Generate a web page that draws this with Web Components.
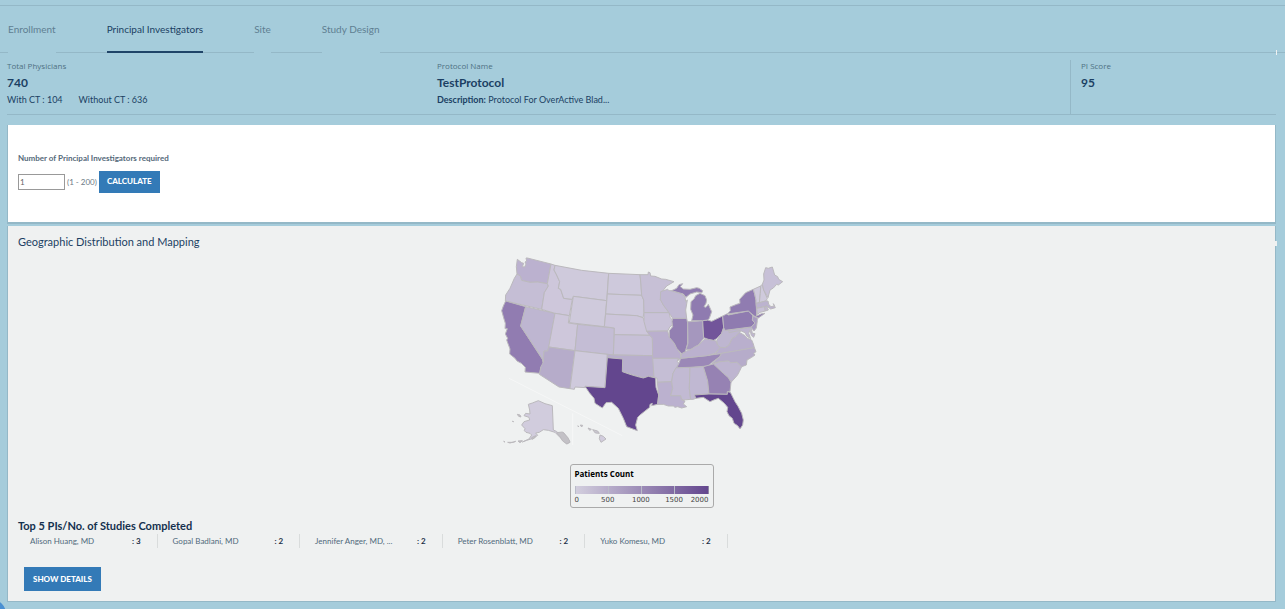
<!DOCTYPE html>
<html lang="en">
<head>
<meta charset="utf-8">
<title>Principal Investigators</title>
<style>
  body { margin: 0; background: #a5ccdb; font-family: Lato, "Liberation Sans", sans-serif; color: #1b3f63; overflow-x: hidden; }
</style>
</head>
<body>
<study-app></study-app>

<script>
const define = (name, html, setup) => {
  const t = document.createElement('template');
  t.innerHTML = html;
  customElements.define(name, class extends HTMLElement {
    constructor() {
      super();
      this.attachShadow({ mode: 'open' }).append(t.content.cloneNode(true));
    }
    connectedCallback() { if (setup) setup(this, this.shadowRoot); }
  });
};

define('tab-link', `
<style>
  :host { display: block; margin-bottom: -1px; }
  a { display: block; padding: 16px 0 15px; line-height: 14px; font-size: 10px; color: #5f7f92; text-decoration: none; background: #a5ccdb; border-bottom: 2px solid #a5ccdb; }
  :host([active]) a { color: #1b3f63; border-color: #1f4468; }
</style>
<a href="#"><slot></slot></a>`, (host, root) => {
  if (host.hasAttribute('active')) root.querySelector('a').setAttribute('aria-current', 'page');
});

define('tab-bar', `
<style>
  :host { display: block; position: relative; border-top: 1px solid #94b8c7; border-bottom: 1px solid #94b8c7; }
  :host::after { content: ""; position: absolute; right: 8px; bottom: -3px; width: 1px; height: 5px; background: #eff1f1; }
  nav { display: flex; gap: 51px; padding-left: 8px; }
</style>
<nav><slot></slot></nav>`);

define('stat-block', `
<style>
  :host { display: block; padding-bottom: 8px; }
  :host([divided]) { border-left: 1px solid #94b8c7; padding-left: 10px; }
  .label { font-family: "Open Sans", sans-serif; font-size: 8px; line-height: 12px; color: #4f7183; }
  .value { font-size: 12px; line-height: 22px; font-weight: 700; }
  .extra { font-size: 9px; line-height: 12px; }
</style>
<div class="label"><slot name="label"></slot></div>
<div class="value"><slot name="value"></slot></div>
<div class="extra"><slot></slot></div>`);

define('stat-row', `
<style>
  :host { display: grid; grid-template-columns: 430fr 633fr 206fr; margin: 7px 9px 0 7px; border-bottom: 1px solid #94b8c7; }
</style>
<slot></slot>`);

define('action-button', `
<style>
  :host { display: inline-block; }
  button { display: block; border: 0; background: #337ab7; color: #fff; font: 900 8px/16px Lato, sans-serif; padding: 2px 8px 4px; cursor: pointer; }
  :host([large]) button { padding: 4px 9px; }
</style>
<button type="button"><slot></slot></button>`);

define('pi-form', `
<style>
  :host { display: block; background: #fff; padding: 26px 10px 29px; border: 1px solid #94b8c7; border-top: 0; border-bottom-width: 2px; }
  label { display: block; font-size: 8px; font-weight: 700; line-height: 14px; color: #54697a; margin-bottom: 6px; }
  .row { display: flex; align-items: center; gap: 2px; font-size: 8px; line-height: 12px; color: #6c7a84; }
  input { box-sizing: border-box; width: 47px; height: 16px; margin: 0; border: 1px solid #999; padding: 0 1px; font: 8px Lato, sans-serif; color: #666; }
</style>
<label for="count">Number of Principal Investigators required</label>
<div class="row"><input id="count" type="text" value="1"><span>(1 - 200)</span><action-button>CALCULATE</action-button></div>`);

define('us-map', `
<style>
  :host { display: block; }
  svg { display: block; width: 300px; margin: 0 auto; }
  .states { stroke: #bbb9bd; stroke-width: 3; stroke-linejoin: round; }
  .inset { fill: none; stroke: #f6f7f7; stroke-width: 3; }
</style>
<svg viewBox="-9 0 900 600" role="img" aria-label="Patients by state"><g class="states"></g><path class="inset" d="M42 385L382 557M233 490V585"/></svg>`, (host, root) => {
  const states = [
    ['#bbb1cf', '67,28 80,38 86,40 82,50 89,51 93,42 90,36 95,33 93,24 97,24 168,42 157,101 128,96 105,97 80,91 76,78 66,72 64,50'],
    ['#c5bed5', '66,72 76,78 80,91 105,97 128,96 157,101 160,108 148,128 140,178 31,153 32,135 45,115 58,85'],
    ['#917cb1', '32,153 92,170 77,228 142,328 145,342 137,352 135,370 90,366 91,352 79,340 66,333 60,325 44,312 45,297 35,270 38,265 31,252 37,236 30,236 31,220 27,207 20,182 25,168'],
    ['#beb6d1', '92,170 180,190 162,290 158,303 147,303 145,330 77,228'],
    ['#cec7db', '168,42 180,46 177,60 185,75 194,95 190,115 197,118 206,145 232,148 223,197 180,190 140,178 148,128 160,108 157,101'],
    ['#cfcadc', '180,46 260,61 341,70 335,152 235,139 232,148 206,145 197,118 190,115 194,95 185,75 177,60'],
    ['#cfcadc', '235,139 335,152 328,230 223,218'],
    ['#cec7db', '180,190 223,197 220,219 248,223 240,302 161,291'],
    ['#c4bdd5', '248,223 358,234 355,315 240,302'],
    ['#b6acca', '161,291 240,302 225,416 192,411 133,373 138,350 145,337 147,303 158,303'],
    ['#cfcadc', '240,302 337,313 330,413 270,409 272,413 240,411 238,418 225,416'],
    ['#cec9dc', '341,70 435,74 438,105 440,136 337,132'],
    ['#cec9dc', '337,132 440,136 446,150 447,188 444,203 425,197 332,192'],
    ['#cdc6db', '332,192 425,197 444,203 450,218 457,238 464,256 358,254 358,234 328,230'],
    ['#c7c0d7', '358,254 464,256 472,264 474,317 355,315'],
    ['#b9afcd', '337,313 355,315 474,317 477,340 477,382 460,378 445,383 425,378 405,372 382,365 383,327 337,323'],
    ['#63468e', '337,323 383,327 382,365 405,373 425,379 445,384 460,379 482,384 483,412 491,435 488,463 470,467 472,460 465,463 464,472 435,495 428,502 422,525 427,542 395,530 385,505 370,475 350,457 333,458 322,474 300,460 297,445 283,428 270,409 330,413'],
    ['#c7c0d6', '435,74 459,74 460,66 465,68 467,78 480,79 500,87 512,88 537,95 515,108 502,124 496,148 505,165 522,188 447,188 446,150 440,136 438,105'],
    ['#c9c2d8', '447,188 522,188 526,203 535,214 533,225 525,230 518,243 455,244 447,215'],
    ['#baafce', '455,244 518,243 523,262 538,280 545,295 557,312 557,325 548,332 550,325 473,325 472,264 464,256'],
    ['#c5bed5', '473,325 550,325 547,335 552,340 545,353 534,370 530,395 487,397 486,384 477,382'],
    ['#bbb1cf', '487,397 530,395 533,415 527,437 557,437 560,450 570,453 565,462 575,470 560,474 548,470 540,472 535,468 520,468 505,463 488,463 491,435'],
    ['#c2bad3', '543,353 585,352 583,415 587,448 565,450 560,447 557,437 527,437 533,415 530,395 534,370'],
    ['#c0b8d2', '585,352 625,350 638,393 642,432 598,435 603,445 594,448 587,448 583,415'],
    ['#9b88b7', '557,325 635,317 680,310 674,320 650,338 640,348 585,352 545,353 552,340'],
    ['#bbb1ce', '557,325 560,312 575,303 590,298 600,290 612,285 628,268 645,268 663,273 668,285 676,292 660,310 635,317'],
    ['#9380b2', '533,205 575,205 578,220 578,280 571,305 560,311 545,295 538,280 523,262 523,242 533,230 531,215'],
    ['#a597be', '578,215 585,215 623,212 626,265 610,285 600,290 588,298 573,299 579,280'],
    ['#72559a', '623,212 638,210 650,214 683,198 686,233 680,250 665,266 656,271 640,268 626,263'],
    ['#c0b8d2', '497,125 518,118 522,122 530,122 560,132 570,140 572,155 577,150 572,180 575,205 533,205 522,188 505,165 496,148'],
    ['#8f7bb0', '530,122 545,115 552,104 563,101 556,110 565,117 585,118 605,113 613,115 623,122 621,128 605,126 585,132 573,142 565,132'],
    ['#8f7bb0', '590,212 594,195 587,178 588,155 597,147 602,137 615,130 630,137 635,150 633,160 627,170 633,172 640,163 650,185 643,205 638,210 623,212'],
    ['#b9afcd', '733,247 750,257 757,265 770,270 775,282 778,293 680,310 660,313 676,292 690,293 702,285 711,265 720,260'],
    ['#beb6d0', '686,233 690,241 702,240 725,238 737,243 732,248 720,260 711,265 702,285 690,293 676,292 668,285 665,272 680,250'],
    ['#beb5d0', '702,240 768,232 772,250 780,251 776,262 769,256 765,240 761,250 767,266 755,258 750,248 737,242 725,243 702,248'],
    ['#b6acca', '680,310 778,293 783,305 776,310 780,315 770,322 756,330 754,345 740,350 725,337 706,338 700,333 675,335 650,341 674,320'],
    ['#beb5d0', '655,342 675,335 700,333 706,338 725,337 740,350 733,365 727,376 708,397 700,383 685,370'],
    ['#9682b3', '625,350 655,342 685,370 700,383 708,397 705,425 697,425 697,433 642,432 638,393'],
    ['#63468e', '598,435 642,432 697,433 697,425 706,427 720,455 729,469 740,490 745,510 743,525 735,537 728,527 717,520 712,505 702,497 696,485 698,472 688,460 670,445 656,450 645,455 625,442 603,445'],
    ['#8f7bb0', '683,198 695,192 700,195 760,183 768,190 774,198 772,210 780,219 768,231 690,241 686,233'],
    ['#907cb1', '697,192 706,182 705,171 725,163 735,160 734,148 752,128 775,118 779,132 783,150 785,192 784,198 800,191 810,190 790,204 778,198 768,190 760,183'],
    ['#a99bc2', '774,198 787,204 787,212 784,234 777,243 768,232 780,219 772,210'],
    ['#cfcadc', '775,118 797,108 796,130 793,158 783,160 783,150 779,132'],
    ['#cfcadc', '797,108 802,103 806,120 817,146 812,153 793,158 796,130'],
    ['#c7c0d7', '802,103 807,90 806,72 812,53 820,55 832,51 839,75 848,80 851,88 863,95 850,105 845,103 835,114 825,120 819,143 806,120'],
    ['#bcb3cf', '783,160 793,158 812,153 819,153 821,163 828,170 838,168 835,161 841,173 827,177 815,168 785,175'],
    ['#c8c1d7', '785,175 809,170 811,183 795,187 787,193'],
    ['#c0b7d1', '809,170 815,168 820,180 811,183'],
    ['#d1ccdd', '100,463 112,459 130,452 150,461 172,467 175,540 184,544 195,553 206,548 218,565 225,577 215,582 198,565 180,547 160,541 145,539 133,547 122,549 128,556 115,565 95,571 82,576 102,567 110,555 105,550 93,547 88,542 90,536 80,525 87,515 104,510 102,502 87,497 92,490 105,492 104,480'],
    ['#c3c1c6', '185,548 203,546 218,562 225,575 216,582 203,573 195,560'],
    ['#c3c1c6', '26,574 30,576'], ['#c3c1c6', '38,577 55,577 62,574 45,579'], ['#c3c1c6', '69,573 82,572 75,578'],
    ['#c3c1c6', '52,514 56,515'], ['#c3c1c6', '67,493 75,495 78,501 71,499'],
    ['#c3c1c6', '110,563 122,557 119,564 111,568'],
    ['#c9c6d0', '248,528 252,530'], ['#c9c6d0', '256,525 263,526 260,531'], ['#c9c6d0', '279,534 289,538 284,541'],
    ['#c9c6d0', '293,539 308,543 313,550 301,549'], ['#d1ccdd', '315,555 325,559 333,567 318,577 313,566']
  ];
  const g = root.querySelector('.states');
  for (const [fill, points] of states) {
    const p = document.createElementNS('http://www.w3.org/2000/svg', 'polygon');
    p.setAttribute('fill', fill);
    p.setAttribute('points', points);
    g.append(p);
  }
});

define('map-legend', `
<style>
  :host { display: block; box-sizing: border-box; width: 144px; margin: 14px auto 0; padding: 3px 4px; border: 1px solid #aaa; border-radius: 3px; color: #000; }
  .title { font-family: "Open Sans", sans-serif; font-size: 8px; font-weight: 700; line-height: 12px; }
  .bar { display: flex; height: 8px; margin-top: 6px; background: linear-gradient(90deg, #d3cfde, #63468e); }
  .bar i { flex: 1; border-left: 1px solid #b9bcc8; }
  .bar i:last-child { border-right: 1px solid #8f87a4; }
  .scale { display: grid; grid-template-columns: 1fr 2fr 2fr 2fr 1fr; justify-items: center; margin-top: 2px; font: 7px/8px "DejaVu Sans", sans-serif; color: #444; }
  .scale :first-child { justify-self: start; }
  .scale :last-child { justify-self: end; }
</style>
<div class="title">Patients Count</div>
<div class="bar"><i></i><i></i><i></i><i></i></div>
<div class="scale"><span>0</span><span>500</span><span>1000</span><span>1500</span><span>2000</span></div>`);

define('pi-item', `
<style>
  :host { display: flex; justify-content: space-between; padding: 0 16px 0 15px; border-right: 1px solid #d9dcdc; font-size: 8px; line-height: 14px; color: #4f6a7c; }
  b { color: #1b3047; }
</style>
<span><slot></slot></span><b><slot name="count"></slot></b>`);

define('pi-list', `
<style>
  :host { display: grid; grid-template-columns: repeat(5, 1fr); width: calc(57% + 2px); margin-left: -3px; }
</style>
<slot></slot>`);

define('geo-panel', `
<style>
  :host { display: block; position: relative; background: #eff1f1; border: 1px solid #94b8c7; border-top: 0; margin-top: 2px; padding: 8px 10px 10px; }
  :host::after { content: ""; position: absolute; right: -2px; top: 15px; width: 2px; height: 5px; background: #eff1f1; }
  h2, h3 { margin: 0; font-size: 11px; line-height: 16px; }
  h2 { font-weight: 400; }
  h3 { margin-top: 10px; font-weight: 700; color: #14304e; }
  action-button { display: block; margin: 19px 0 0 6px; }
</style>
<h2>Geographic Distribution and Mapping</h2>
<us-map></us-map>
<map-legend></map-legend>
<h3>Top 5 PIs/No. of Studies Completed</h3>
<pi-list>
  <pi-item>Alison Huang, MD<span slot="count">: 3</span></pi-item>
  <pi-item>Gopal Badlani, MD<span slot="count">: 2</span></pi-item>
  <pi-item>Jennifer Anger, MD, ...<span slot="count">: 2</span></pi-item>
  <pi-item>Peter Rosenblatt, MD<span slot="count">: 2</span></pi-item>
  <pi-item>Yuko Komesu, MD<span slot="count">: 2</span></pi-item>
</pi-list>
<action-button large>SHOW DETAILS</action-button>`);

define('help-bubble', `
<style>
  :host { position: fixed; left: -24px; bottom: -20px; width: 30px; height: 30px; border-radius: 50%; background: #4a90d2; }
</style>`);

define('study-app', `
<style>
  :host { display: block; padding-top: 5px; }
  main { margin: 10px 9px 0 7px; }
  .gap { display: flex; gap: 16px; }
</style>
<tab-bar>
  <tab-link>Enrollment</tab-link>
  <tab-link active>Principal Investigators</tab-link>
  <tab-link>Site</tab-link>
  <tab-link>Study Design</tab-link>
</tab-bar>
<stat-row>
  <stat-block><span slot="label">Total Physicians</span><span slot="value">740</span><div class="gap"><span>With CT : 104</span><span>Without CT : 636</span></div></stat-block>
  <stat-block><span slot="label">Protocol Name</span><span slot="value">TestProtocol</span><b>Description:</b> Protocol For OverActive Blad...</stat-block>
  <stat-block divided><span slot="label">PI Score</span><span slot="value">95</span></stat-block>
</stat-row>
<main>
  <pi-form></pi-form>
  <geo-panel></geo-panel>
</main>
<help-bubble></help-bubble>`);
</script>
</body>
</html>
